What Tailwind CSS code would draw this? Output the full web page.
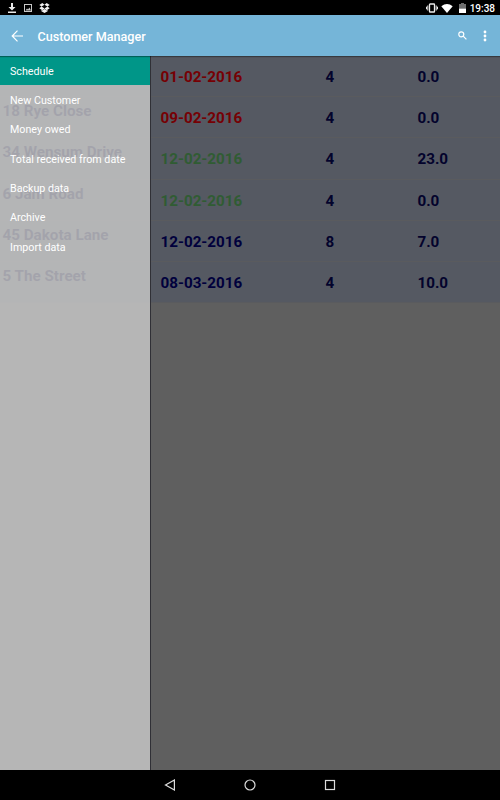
<!DOCTYPE html>
<html lang="en">
  <head>
    <meta charset="utf-8" />
    <title>Customer Manager</title>
    <meta name="viewport" content="width=device-width, initial-scale=1" />
    <script src="https://cdn.jsdelivr.net/npm/@tailwindcss/browser@4"></script>
  </head>
  <body class="bg-black font-[Roboto,sans-serif]">
    <div class="flex flex-col w-full h-screen overflow-hidden">
      <!-- Status bar -->
      <div class="flex items-center justify-between h-[15px] shrink-0 pt-px pl-[7px] pr-[5px] text-white bg-black">
        <div class="flex items-center gap-[6px]">
          <svg class="w-[10px] h-[10px]" viewBox="0 0 10 10" fill="#e8e8e8">
            <path d="M4 0h2v4h2.500L5 7.500 1.500 4H4zM1 8.500h8V10H1z" />
          </svg>
          <svg class="w-[10px] h-[10px]" viewBox="0 0 10 10" fill="none" stroke="#c8c8c8" stroke-width="1">
            <rect x="1.500" y="1.500" width="7" height="7" />
            <path d="M2.500 7.500L4 5.500l1 1 1.500-2 1.500 3z" fill="#c8c8c8" stroke="none" />
          </svg>
          <svg class="w-[11px] h-[10px]" viewBox="0 0 11 10" fill="#f0f0f0">
            <path d="M3.300 0L5.500 1.800 2.600 3.600.3 1.900zM7.700 0L5.500 1.800l2.900 1.800 2.300-1.700zM.3 5.300l2.300-1.700 2.900 1.800-2.200 1.800zM10.700 5.300L8.400 3.600 5.500 5.400l2.200 1.800zM5.500 5.900l2.200 1.600.9-.5v1.200l-3.100 1.800-3.100-1.800V7l.9.500z" />
          </svg>
        </div>
        <div class="flex items-center">
          <svg class="w-[12px] h-[10px]" viewBox="0 0 12 10" fill="none" stroke="#ededed">
            <rect x="3.500" y="1" width="5" height="8" rx=".6" stroke-width="1.300" />
            <path d="M1.800 2.500v5M10.200 2.500v5M.5 3.700v2.600M11.500 3.700v2.600" />
          </svg>
          <svg class="w-[12px] h-[9px] ml-[3px]" viewBox="0 0 12 9" fill="#fff">
            <path d="M6 9L.3 2.300Q6-2.100 11.700 2.300z" />
          </svg>
          <svg class="w-[7px] h-[10px] ml-[6px]" viewBox="0 0 7 10">
            <path d="M0 1h2V0h3v1h2v4.500H0z" fill="#6e6e6e" />
            <path d="M0 5.500h7V10H0z" fill="#fff" />
          </svg>
          <span class="pt-px ml-[4px] text-[10px] leading-none font-medium">19:38</span>
        </div>
      </div>

      <!-- App bar -->
      <div class="flex items-center h-[41px] shrink-0 pl-[11px] pr-[13px] text-white bg-[#75b5d8] z-10 shadow-[0_1px_1px_rgba(0,0,0,0.35)]">
        <svg class="w-[13px] h-[12px]" viewBox="0 0 13 12" fill="none" stroke="#fff" stroke-width="1.200">
          <path d="M12 6H1.500M6.500.7L1.200 6l5.300 5.300" />
        </svg>
        <h1 class="grow pt-[3px] ml-[13.500px] text-[12.600px] leading-none font-medium">Customer Manager</h1>
        <svg class="w-[9px] h-[9px]" viewBox="0 0 9 9" fill="none" stroke="#fff" stroke-width="1.200">
          <circle cx="3.300" cy="3.300" r="2.500" />
          <path d="M5.200 5.200l3.200 3.200" />
        </svg>
        <svg class="w-[4px] h-[12px] ml-[16px]" viewBox="0 0 4 12" fill="#fff">
          <circle cx="2" cy="2" r="1.400" />
          <circle cx="2" cy="6" r="1.400" />
          <circle cx="2" cy="10" r="1.400" />
        </svg>
      </div>

      <!-- Customer list, dimmed while the drawer is open -->
      <div class="relative grow bg-[#5f5f5f]">
        <div class="text-[15.200px] leading-none font-bold text-[#03032c]">
          <div class="grid grid-cols-[158px_165px_92px_1fr] items-center h-[41px] pt-[3px] pl-[2.500px] bg-[#555962] border-b border-[#5a5b5e]">
            <span></span><span class="text-[#760004]">01-02-2016</span><span>4</span><span>0.0</span>
          </div>
          <div class="grid grid-cols-[158px_165px_92px_1fr] items-center h-[41.250px] pt-[3px] pl-[2.500px] bg-[#555962] border-b border-[#5a5b5e]">
            <span class="pb-[14px]">18 Rye Close</span><span class="text-[#760004]">09-02-2016</span><span>4</span><span>0.0</span>
          </div>
          <div class="grid grid-cols-[158px_165px_92px_1fr] items-center h-[41.250px] pt-[3px] pl-[2.500px] bg-[#555962] border-b border-[#5a5b5e]">
            <span class="pb-[14px]">34 Wensum Drive</span><span class="text-[#305c33]">12-02-2016</span><span>4</span><span>23.0</span>
          </div>
          <div class="grid grid-cols-[158px_165px_92px_1fr] items-center h-[41.250px] pt-[3px] pl-[2.500px] bg-[#555962] border-b border-[#5a5b5e]">
            <span class="pb-[14px]">6 Jam Road</span><span class="text-[#305c33]">12-02-2016</span><span>4</span><span>0.0</span>
          </div>
          <div class="grid grid-cols-[158px_165px_92px_1fr] items-center h-[41.250px] pt-[3px] pl-[2.500px] bg-[#555962] border-b border-[#5a5b5e]">
            <span class="pb-[14px]">45 Dakota Lane</span><span class="text-[#00003c]">12-02-2016</span><span>8</span><span>7.0</span>
          </div>
          <div class="grid grid-cols-[158px_165px_92px_1fr] items-center h-[41.250px] pt-[3px] pl-[2.500px] bg-[#555962] border-b border-[#5a5b5e]">
            <span class="pb-[14px]">5 The Street</span><span class="text-[#00003c]">08-03-2016</span><span>4</span><span>10.0</span>
          </div>
        </div>

        <!-- Navigation drawer -->
        <div class="absolute inset-y-0 left-0 w-[151px] bg-[#cccccc]/80 border-r border-[#303036]">
          <ul class="text-[10.700px] leading-none text-white">
            <li class="flex items-center h-[29.400px] pt-[3px] pl-[10px] bg-[#009688]">Schedule</li>
            <li class="flex items-center h-[29.400px] pt-[2px] pl-[10px]">New Customer</li>
            <li class="flex items-center h-[29.400px] pt-[2px] pl-[10px]">Money owed</li>
            <li class="flex items-center h-[29.400px] pt-[2px] pl-[10px]">Total received from date</li>
            <li class="flex items-center h-[29.400px] pt-[2px] pl-[10px]">Backup data</li>
            <li class="flex items-center h-[29.400px] pt-[2px] pl-[10px]">Archive</li>
            <li class="flex items-center h-[29.400px] pt-[2px] pl-[10px]">Import data</li>
          </ul>
        </div>
      </div>

      <!-- Navigation buttons -->
      <div class="flex items-center justify-center gap-[68px] h-[30px] shrink-0 bg-black">
        <svg class="w-[12px] h-[12px]" viewBox="0 0 12 12" fill="none" stroke="#dcdcdc" stroke-width="1.200">
          <path d="M10.400 1v10L1.500 6z" />
        </svg>
        <svg class="w-[12px] h-[12px]" viewBox="0 0 12 12" fill="none" stroke="#dcdcdc" stroke-width="1.200">
          <circle cx="6" cy="6" r="5" />
        </svg>
        <svg class="w-[12px] h-[12px]" viewBox="0 0 12 12" fill="none" stroke="#dcdcdc" stroke-width="1.200">
          <rect x="1.500" y="1.500" width="9" height="9" />
        </svg>
      </div>
    </div>
  </body>
</html>
